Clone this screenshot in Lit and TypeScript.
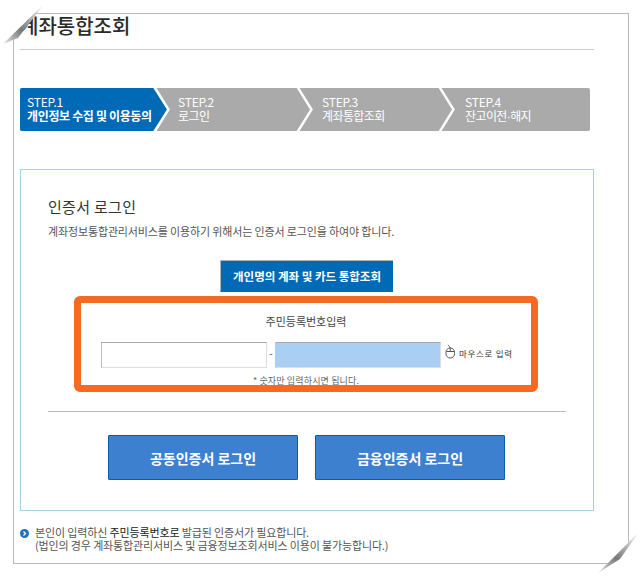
import { LitElement, html, css, svg } from "lit";
import { customElement } from "lit/decorators.js";

const STEPS = [
  { cls: "s1", no: "STEP.1", name: html`개인정보 수집 및 이용동의` },
  { cls: "s2", no: "STEP.2", name: html`로그인` },
  { cls: "s3", no: "STEP.3", name: html`계좌통합조회` },
  { cls: "s4", no: "STEP.4", name: html`잔고이전<span class="dot">·</span>해지` },
];

@customElement("app-root")
export class AppRoot extends LitElement {
  static styles = css`
    :host { display: block; width: 642px; height: 577px; position: relative; overflow: hidden; background: #fff;
      font-family: "Noto Sans CJK KR", "Noto Sans", sans-serif; color: #444; }
    * { box-sizing: border-box; }
    .frame { margin: 13px 0 0 13px; width: 616px; height: 551px; border: 1px solid #b9b9b9; padding: 0 34px 0 6px; }
    h1 { margin: 0; height: 36px; border-bottom: 1px solid #ccc; font-size: 20px; line-height: 24px; font-weight: 500; color: #2b2b2b; }
    .steps { display: flex; margin-top: 38px; width: 570px; height: 43px; background: #aaa; border-radius: 2px; }
    .step { position: relative; height: 43px; padding-top: 7px; color: #fff; font-size: 12px; line-height: 13.5px; letter-spacing: -0.2px; }
    .step b { display: block; font-weight: 400; letter-spacing: -0.6px; white-space: nowrap; }
    .dot { font-family: "Liberation Sans", sans-serif; }
    .s1 { width: 133px; padding-left: 7px; background: #006ab6; border-radius: 2px 0 0 2px; }
    .s1 b { font-weight: 700; letter-spacing: -0.35px; }
    .s2 { width: 143px; padding-left: 25px; }
    .s3 { width: 142px; padding-left: 26px; }
    .s4 { width: 152px; padding-left: 27px; }
    .chev { position: absolute; left: 100%; top: 0; width: 20px; height: 43px; z-index: 1; }
    .box { margin-top: 38px; height: 342px; border: 1px solid #a9cde0; padding: 27px 27px 0; }
    h2 { margin: 0; font-size: 15px; line-height: 20px; font-weight: 400; color: #333; letter-spacing: 0.3px; }
    .desc { margin: 6px 0 0; font-size: 11px; line-height: 16px; letter-spacing: -0.14px; color: #555; white-space: nowrap; }
    .own { display: block; margin: 21px 0 0 172px; width: 173px; height: 32px; background: #006ab6; border: 1px solid #aab4bc; border-width: 1px 0 1px 1px;
      border-bottom-color: #006ab6; color: #fff; font: 700 11.5px/30px "Noto Sans CJK KR", sans-serif; text-align: center; padding: 0; }
    .form { margin: 4px 0 0 26px; width: 464px; height: 96px; border: 7px solid #f56a23; border-radius: 6px; overflow: hidden; padding: 10px 0 0 20px; }
    .label { margin: 0 0 0 -20px; font-size: 11px; line-height: 16px; text-align: center; color: #444; }
    .row { display: flex; align-items: flex-start; margin-top: 13px; height: 26px; }
    .row input { width: 166px; height: 26px; padding: 0; border: 1px solid #ddd; border-top-color: #aaa; border-left-color: #bbb; background: #fff; }
    .row input.sec { background: #a9cff4; border-left-color: #a9cff4; }
    .dash { width: 8px; text-align: center; font-size: 10px; line-height: 22px; }
    .mouse { margin: 2px 0 0 4px; width: 11px; height: 16px; flex: none; }
    .mtext { margin: 4px 0 0 3px; font-size: 8.5px; line-height: 14px; color: #333; letter-spacing: 0.7px; white-space: nowrap; }
    .hint { margin: 6px 0 0 -20px; font-size: 9px; line-height: 14px; text-align: center; color: #666; letter-spacing: 0.15px; }
    .rule { margin: 19px 0 0; height: 1px; background: #bbb; }
    .btns { display: flex; gap: 17px; margin: 23px 0 0 60px; }
    .btn { width: 190px; height: 45px; padding: 0; background: #3d80d0; border: 1px solid #0d5ca5; border-radius: 1px; color: #fff;
      font: 700 14px/1 "Noto Sans CJK KR", sans-serif; }
    .note { display: flex; gap: 6px; margin-top: 15px; font-size: 11px; line-height: 13px; color: #555; white-space: nowrap; letter-spacing: -0.14px; }
    .note svg { width: 9px; height: 9px; margin-top: 3px; flex: none; }
    .note p { margin: 0; }
    .note strong { font-weight: 400; color: #222; }
    .curl { position: absolute; pointer-events: none; }
    .tl { left: 0; top: 0; width: 50px; height: 50px; }
    .br { left: 592px; top: 527px; width: 50px; height: 50px; }
  `;

  private curl(id: string, white: string, shadow: string, x1: number, y1: number, x2: number, y2: number) {
    return svg`
      <defs>
        <linearGradient id=${id} gradientUnits="userSpaceOnUse" x1=${x1} y1=${y1} x2=${x2} y2=${y2}>
          <stop offset="0" stop-color="#fff"/>
          <stop offset="0.6" stop-color="#777"/>
          <stop offset="1" stop-color="#e8e8e8"/>
        </linearGradient>
      </defs>
      <polygon points=${white} fill="#fff"/>
      <polygon points=${shadow} fill="url(#${id})"/>`;
  }

  render() {
    return html`
      <div class="frame">
        <h1>계좌통합조회</h1>
        <div class="steps">
          ${STEPS.map((s, i) => html`
            <div class="step ${s.cls}">
              ${s.no}<b>${s.name}</b>
              ${i < 3 ? html`<svg class="chev" viewBox="0 0 20 43">
                ${i === 0 ? svg`<polygon points="0,0 14,21.5 0,43" fill="#006ab6"/>` : ""}
                <polyline points="1.5,-1 15.5,21.5 1.5,44" fill="none" stroke="#fff" stroke-width="2.4"/>
              </svg>` : ""}
            </div>`)}
        </div>
        <section class="box">
          <h2>인증서 로그인</h2>
          <p class="desc">계좌정보통합관리서비스를 이용하기 위해서는 인증서 로그인을 하여야 합니다.</p>
          <button class="own">개인명의 계좌 및 카드 통합조회</button>
          <div class="form">
            <p class="label">주민등록번호입력</p>
            <div class="row">
              <input type="text" />
              <span class="dash">-</span>
              <input class="sec" type="text" />
              <svg class="mouse" viewBox="0 0 11 16" fill="none" stroke="#555" stroke-width="1">
                <rect x="1" y="4" width="8.5" height="10" rx="4.2"/>
                <path d="M1.3 7.5H9.2M5.2 4V7.5M5.2 4C5.2 2.4 3.6 2.4 3.2 0.8"/>
              </svg>
              <span class="mtext">마우스로 입력</span>
            </div>
            <p class="hint">* 숫자만 입력하시면 됩니다.</p>
          </div>
          <div class="rule"></div>
          <div class="btns">
            <button class="btn">공동인증서 로그인</button>
            <button class="btn">금융인증서 로그인</button>
          </div>
        </section>
        <div class="note">
          <svg viewBox="0 0 9 9"><circle cx="4.5" cy="4.5" r="4.5" fill="#1d70c4"/><path d="M3.5 2.5L5.5 4.5L3.5 6.5" fill="none" stroke="#fff" stroke-width="1.3"/></svg>
          <p>본인이 입력하신 <strong>주민등록번호로</strong> 발급된 인증서가 필요합니다.<br />(법인의 경우 계좌통합관리서비스 및 금융정보조회서비스 이용이 불가능합니다.)</p>
        </div>
      </div>
      <svg class="curl tl" viewBox="0 0 50 50">
        ${this.curl("g1", "0,0 44,0 44,4 3,44 0,44", "44,4 3,44 18,38", 44, 4, 3, 44)}
      </svg>
      <svg class="curl br" viewBox="0 0 50 50">
        ${this.curl("g2", "52,0 52,52 0,52", "47,5 6,46 28,32", 47, 5, 6, 46)}
      </svg>
    `;
  }
}
